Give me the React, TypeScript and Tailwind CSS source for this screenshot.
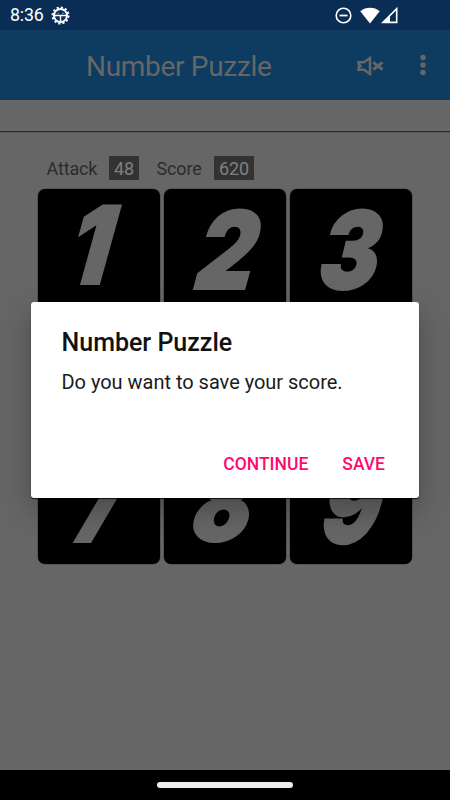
import React from "react";

type Tile = { n: number; shape: string };

const tiles: Tile[] = [
  { n: 1, shape: "translate-x-[-5px] translate-y-[-5px] -skew-x-[18deg] scale-x-[0.85]" },
  { n: 2, shape: "translate-x-[4.5px] translate-y-[0px] -skew-x-[18deg] scale-x-[0.84]" },
  { n: 3, shape: "translate-x-[1.5px] translate-y-[0px] -skew-x-[16deg] scale-x-[0.83]" },
  { n: 4, shape: "-skew-x-[18deg] scale-x-[0.8]" },
  { n: 5, shape: "-skew-x-[18deg] scale-x-[0.8]" },
  { n: 6, shape: "-skew-x-[18deg] scale-x-[0.8]" },
  { n: 7, shape: "translate-x-[1px] translate-y-[1px] -skew-x-[15deg] scale-x-[0.76]" },
  { n: 8, shape: "translate-x-[1px] translate-y-[0px] -skew-x-[18deg] scale-x-[0.8]" },
  { n: 9, shape: "translate-x-[3px] translate-y-[2px] -skew-x-[18deg] scale-x-[0.8]" },
];

function StatusBar() {
  return (
    <div className="flex h-[30px] items-center bg-[#092d55] pl-[10px] pr-[52px] text-white">
      <span className="w-[35px] text-[17.8px] leading-[30px] tracking-[-0.2px]">8:36</span>
      <svg className="ml-[6px]" width="19" height="19" viewBox="0 0 19 19" fill="none" stroke="currentColor">
        <circle cx="9.5" cy="9.5" r="8" strokeWidth="2" strokeDasharray="2.2 1.99" />
        <circle cx="9.5" cy="9.5" r="6.5" strokeWidth="2" />
        <path d="M3.5 9.5h12M9.5 9.5v6" strokeWidth="1.4" />
        <path d="M6.5 7.2h1.2M11.3 7.2h1.2" strokeWidth="0.8" />
      </svg>
      <svg className="ml-auto" width="17" height="17" viewBox="0 0 17 17" fill="none" stroke="currentColor">
        <circle cx="8.5" cy="8.5" r="7.3" strokeWidth="1.6" />
        <path d="M4.5 8.5h8" strokeWidth="1.8" />
      </svg>
      <svg className="ml-[8px]" width="20" height="17" viewBox="0 0 20 17" fill="currentColor">
        <path d="M0.3 4.3C5.5 -0.3 14.5 -0.3 19.7 4.3L10 16.5Z" />
      </svg>
      <svg className="ml-[1px]" width="17" height="17" viewBox="0 0 17 17" fill="none" stroke="currentColor">
        <path d="M2 15.4L15.7 1.7V15.4Z" strokeWidth="1.6" />
        <path d="M1.5 16L9 8.5V16Z" fill="currentColor" stroke="none" />
      </svg>
    </div>
  );
}

function AppBar() {
  return (
    <header className="flex h-[70px] items-center bg-[#0d3c60] pl-[86px] pr-[24px] text-[#666]">
      <h1 className="mt-[3px] w-[200px] whitespace-nowrap text-[28px] leading-[70px] tracking-[-0.3px]">Number Puzzle</h1>
      <svg className="ml-auto mr-[36px] mt-[2px]" width="27" height="20" viewBox="0 0 27 20" fill="none" stroke="currentColor">
        <path d="M1.5 6.3H7L13 2V18L7 13.7H1.5V11.8L3.5 10L1.5 8.2Z" strokeWidth="2.5" />
        <path d="M16.3 6.3L25.5 13.5M25.5 6.3L16.3 13.5" strokeWidth="2.9" />
      </svg>
      <svg width="6" height="22" viewBox="0 0 6 22" fill="currentColor">
        <circle cx="3" cy="3.5" r="2.7" />
        <circle cx="3" cy="11" r="2.7" />
        <circle cx="3" cy="18.5" r="2.7" />
      </svg>
    </header>
  );
}

export default function App() {
  return (
    <div className="relative flex h-[800px] w-[450px] flex-col overflow-hidden bg-[#666] font-['Roboto',sans-serif]">
      <StatusBar />
      <AppBar />
      <div className="mt-[31px] h-px shrink-0 bg-[#2b2b2b] shadow-[0_1px_0_#5a5a5a]" />
      <main className="flex-1 px-[37.5px] pt-[24px]">
        <div className="flex h-[24px] items-center pl-[9px] text-[18px] leading-[24px] tracking-[-0.15px] text-[#2c2c2c]">
          <span className="w-[62.5px] pt-[2px]">Attack</span>
          <span className="h-[24px] w-[30px] bg-[#333] pt-[1px] text-center text-[#808080]">48</span>
          <span className="ml-[17.5px] w-[57.5px] pt-[2px]">Score</span>
          <span className="h-[24px] w-[40px] bg-[#333] pt-[1px] text-center text-[#808080]">620</span>
        </div>
        <div className="mt-[9px] grid grid-cols-[repeat(3,122.3px)] gap-x-[4px] gap-y-[4px]">
          {tiles.map((t) => (
            <div
              key={t.n}
              className="flex h-[122.2px] items-center justify-center rounded-[7px] bg-black shadow-[0_0_0_0.6px_#484848]"
            >
              <span
                className={`block font-['Inter',sans-serif] text-[108px] font-black leading-[122px] text-[#666] [-webkit-text-stroke:2px_#666] ${t.shape}`}
              >
                {t.n}
              </span>
            </div>
          ))}
        </div>
      </main>
      <footer className="flex h-[30px] shrink-0 items-center justify-center bg-black">
        <div className="h-[5.5px] w-[136px] rounded-full bg-[#ececec]" />
      </footer>

      <section
        role="dialog"
        className="absolute left-[31px] top-[301.5px] flex h-[196.5px] w-[388px] flex-col rounded-[3px] bg-white px-[30.5px] pt-[24px] shadow-[0_12px_30px_rgba(0,0,0,0.28),0_1px_1px_rgba(0,0,0,0.8)]"
      >
        <h2 className="text-[25px] font-medium leading-[34px] text-[#111]">Number Puzzle</h2>
        <p className="mt-[9px] text-[20px] leading-[26px] tracking-[-0.02px] text-[#1b1b1b]">Do you want to save your score.</p>
        <div className="mb-[22px] ml-auto mr-[3.5px] mt-auto flex gap-[34px] text-[17.5px] font-medium leading-[24px] text-[#ff0a6c]">
          <button type="button">CONTINUE</button>
          <button type="button">SAVE</button>
        </div>
      </section>
    </div>
  );
}
